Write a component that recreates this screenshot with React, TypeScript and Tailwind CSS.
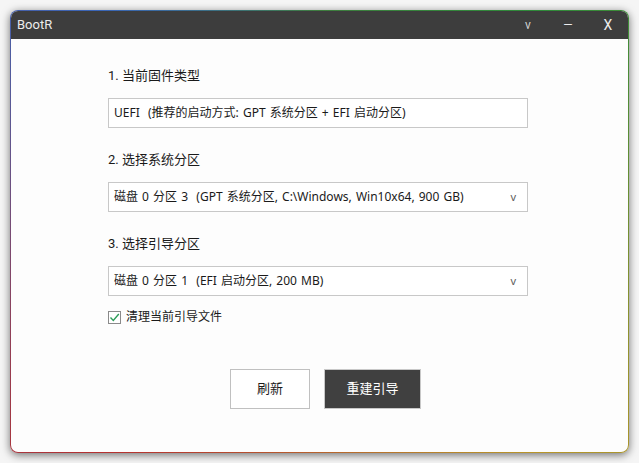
export default function App() {
  return (
    <div className="w-[639px] h-[463px] bg-[#f5f5f5] p-[10px] font-['Roboto','Noto_Sans_CJK_SC',sans-serif] text-[13px] text-[#1a1a1a]">
      <div className="h-full rounded-[8px] p-px bg-[conic-gradient(from_0deg,#3f7d3f,#2f8a3a_45deg,#b8962a_135deg,#b53030_225deg,#3a66b8_315deg,#3f7d3f)] shadow-[0_2px_8px_rgba(0,0,0,0.55)]">
        <div className="h-full flex flex-col rounded-[7px] overflow-hidden bg-[#fdfdfd]">
          {/* title bar */}
          <div className="h-[28px] shrink-0 bg-[#3d3d3d] flex items-center text-[#ececec]">
            <span className="pl-[6px] text-[13px]">BootR</span>
            <div className="ml-auto flex items-center h-full">
              <span className="w-[40px] text-center text-[12px] text-[#d0d0d0]">v</span>
              <span className="w-[40px] text-center text-[12px]">—</span>
              <span className="w-[40px] text-center text-[14px]">X</span>
            </div>
          </div>

          {/* body */}
          <div className="flex-1 pl-[97px] pt-[27px]">
            <div className="w-[420px] flex flex-col">
              <div className="leading-[20px]">1. 当前固件类型</div>
              <div className="mt-[12px] h-[30px] border border-[#c8c8c8] bg-white flex items-center px-[5px] whitespace-pre text-[12px] [word-spacing:1px] font-['Noto_Sans','Noto_Sans_CJK_SC',sans-serif]">
                UEFI  (推荐的启动方式: GPT 系统分区 + EFI 启动分区)
              </div>

              <div className="mt-[22px] leading-[20px]">2. 选择系统分区</div>
              <div className="mt-[12px] h-[30px] border border-[#c8c8c8] bg-white flex items-center px-[5px] whitespace-pre text-[12px] [word-spacing:1px] font-['Noto_Sans','Noto_Sans_CJK_SC',sans-serif]">
                <span>磁盘 0 分区 3  (GPT 系统分区, C:\Windows, Win10x64, 900 GB)</span>
                <span className="ml-auto mr-[6px] text-[11px] text-[#606060]">v</span>
              </div>

              <div className="mt-[22px] leading-[20px]">3. 选择引导分区</div>
              <div className="mt-[12px] h-[30px] border border-[#c8c8c8] bg-white flex items-center px-[5px] whitespace-pre text-[12px] [word-spacing:1px] font-['Noto_Sans','Noto_Sans_CJK_SC',sans-serif]">
                <span>磁盘 0 分区 1  (EFI 启动分区, 200 MB)</span>
                <span className="ml-auto mr-[6px] text-[11px] text-[#606060]">v</span>
              </div>

              <div className="mt-[12px] flex items-center gap-[5px] leading-[18px] text-[12px]">
                <div className="w-[13px] h-[13px] border border-[#8a8a8a] bg-white flex items-center justify-center">
                  <svg width="11" height="11" viewBox="0 0 11 11" fill="none">
                    <path d="M1.5 5.5 L4.3 8.4 L9.8 2" stroke="#2e9e5a" strokeWidth="1.4" />
                  </svg>
                </div>
                <span>清理当前引导文件</span>
              </div>

              <div className="mt-[43px] ml-[122px] flex gap-[14px]">
                <button className="w-[80px] h-[40px] border border-[#c0c0c0] bg-white text-[#1a1a1a]">刷新</button>
                <button className="w-[97px] h-[40px] border border-[#c8c8c8] bg-[#404040] text-white">重建引导</button>
              </div>
            </div>
          </div>
        </div>
      </div>
    </div>
  );
}
